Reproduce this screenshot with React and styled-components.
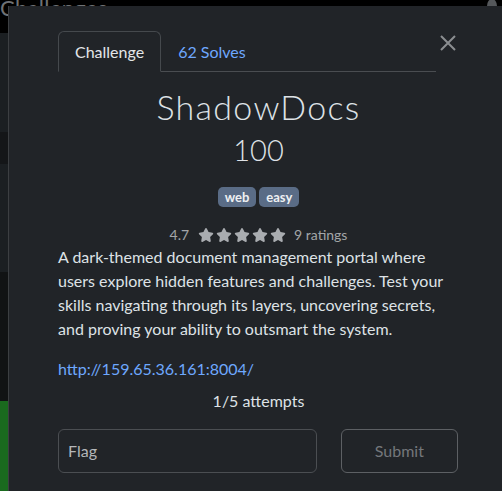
import React from "react";
import styled, { createGlobalStyle } from "styled-components";

const Global = createGlobalStyle`
  html, body { margin: 0; padding: 0; background: #000; }
  body { font-family: Lato, "Noto Sans", sans-serif; }
  * { box-sizing: border-box; }
`;

const Page = styled.div`
  position: relative;
  width: 502px;
  height: 491px;
  overflow: hidden;
  background: #000;
`;

const BgHeading = styled.h1`
  margin: 0;
  height: 33px;
  padding-left: 0;
  font-size: 22px;
  font-weight: 400;
  line-height: 16px;
  color: #6f7275;
  letter-spacing: 0.3px;
`;

const BgBlock = styled.div`
  height: ${(p) => p.$h}px;
  background: ${(p) => p.$c};
`;

const Avatar = styled.div`
  position: absolute;
  top: -1px;
  left: 487px;
  width: 10px;
  height: 14px;
  border-radius: 50%;
  background: #55585b;
`;

const Modal = styled.div`
  position: absolute;
  top: 6px;
  left: 8px;
  width: 500px;
  height: 500px;
  background: #212428;
  border-left: 1px solid #3c3f42;
  padding: 25px 49px 0 49px;
  color: #dee2e6;
`;

const HeaderRow = styled.div`
  display: flex;
  align-items: flex-start;
`;

const Tabs = styled.ul`
  flex: 1;
  display: flex;
  margin: 0;
  padding: 0;
  list-style: none;
  border-bottom: 1px solid #4a4d51;
`;

const Tab = styled.li`
  margin-bottom: -1px;
  padding: 8px 16px;
  font-size: 16px;
  line-height: 23px;
  border: 1px solid ${(p) => (p.$active ? "#45494d" : "transparent")};
  border-bottom-color: ${(p) => (p.$active ? "#212428" : "transparent")};
  border-radius: 6px 6px 0 0;
  color: ${(p) => (p.$active ? "#e4e6e8" : "#6ea8fe")};
  background: ${(p) => (p.$active ? "#212428" : "transparent")};
`;

const CloseButton = styled.button`
  margin: 4px 3px 0 4px;
  width: 16px;
  height: 16px;
  padding: 0;
  border: 0;
  background: transparent;
  display: flex;
`;

const Title = styled.h2`
  margin: 15px 0 0;
  text-align: center;
  font-size: 34px;
  line-height: 1.2;
  font-weight: 300;
  letter-spacing: 1.3px;
  color: #dee2e6;
`;

const Value = styled.h3`
  margin: 5px 0 0;
  text-align: center;
  font-size: 29px;
  line-height: 1.2;
  font-weight: 300;
  color: #dee2e6;
`;

const Tags = styled.div`
  margin-top: 19px;
  display: flex;
  justify-content: center;
  gap: 3px;
`;

const Tag = styled.span`
  height: 20px;
  padding: 0 7px;
  border-radius: 5px;
  background: #5a6c86;
  color: #eef0f2;
  font-size: 13px;
  font-weight: 700;
  line-height: 20px;
`;

const RatingRow = styled.div`
  margin-top: 18px;
  height: 20px;
  display: flex;
  align-items: center;
  justify-content: center;
  font-size: 14px;
  color: #a3a6a9;
`;

const Stars = styled.span`
  display: flex;
  gap: 2px;
  margin: 0 8px 0 9px;
`;

const Description = styled.p`
  margin: 0;
  font-size: 16px;
  line-height: 24px;
  color: #dee2e6;
`;

const Link = styled.a`
  display: block;
  margin-top: 16px;
  font-size: 16px;
  line-height: 24px;
  color: #6ea8fe;
  text-decoration: none;
`;

const Attempts = styled.p`
  margin: 8px 0 0;
  text-align: center;
  font-size: 16px;
  line-height: 24px;
  color: #dee2e6;
`;

const FormRow = styled.form`
  margin-top: 16px;
  display: grid;
  grid-template-columns: 258.67px 117.33px;
  column-gap: 24px;
`;

const FlagInput = styled.input`
  height: 44px;
  padding: 0 9px;
  border: 1px solid #4b4e52;
  border-radius: 6px;
  background: #212428;
  font-family: Lato, sans-serif;
  font-size: 16px;
  color: #dee2e6;
  outline: none;
  &::placeholder { color: #b4b7ba; }
`;

const SubmitButton = styled.button`
  height: 44px;
  border: 1px solid #5d6064;
  border-radius: 6px;
  background: transparent;
  font-family: Lato, sans-serif;
  font-size: 16px;
  color: #74777b;
`;

const Star = () => (
  <svg width="16" height="14" viewBox="0 0 576 512">
    <path
      fill="#a9acb0"
      d="M316.9 18C311.6 7 300.4 0 288.1 0s-23.4 7-28.8 18L195 150.3 51.4 171.5c-12 1.8-22 10.2-25.7 21.7s-.7 24.2 7.9 32.7L137.8 329 113.2 474.7c-2 12 3 24.2 12.9 31.3s23 8 33.8 2.3l128.3-68.5 128.3 68.5c10.8 5.7 23.9 4.9 33.8-2.3s14.9-19.3 12.9-31.3L438.5 329 542.7 225.9c8.6-8.5 11.7-21.2 7.9-32.7s-13.7-19.9-25.7-21.7L381.2 150.3 316.9 18z"
    />
  </svg>
);

export default function App() {
  return (
    <Page>
      <Global />
      <BgHeading>Challenges</BgHeading>
      <BgBlock $h={99} $c="#1b1f22" />
      <BgBlock $h={32} $c="#141618" />
      <BgBlock $h={108} $c="#1b1f22" />
      <BgBlock $h={129} $c="#111314" />
      <BgBlock $h={90} $c="#1a6a1e" />
      <Avatar />
      <Modal>
        <HeaderRow>
          <Tabs>
            <Tab $active>Challenge</Tab>
            <Tab>62 Solves</Tab>
          </Tabs>
          <CloseButton aria-label="Close">
            <svg width="16" height="16" viewBox="0 0 16 16">
              <path d="M1 1L15 15M15 1L1 15" stroke="#8b8e91" strokeWidth="2" />
            </svg>
          </CloseButton>
        </HeaderRow>
        <Title>ShadowDocs</Title>
        <Value>100</Value>
        <Tags>
          <Tag>web</Tag>
          <Tag>easy</Tag>
        </Tags>
        <RatingRow>
          <span>4.7</span>
          <Stars>
            <Star />
            <Star />
            <Star />
            <Star />
            <Star />
          </Stars>
          <span>9 ratings</span>
        </RatingRow>
        <Description>
          A dark-themed document management portal where users explore hidden
          features and challenges. Test your skills navigating through its
          layers, uncovering secrets, and proving your ability to outsmart the
          system.
        </Description>
        <Link href="#">http://159.65.36.161:8004/</Link>
        <Attempts>1/5 attempts</Attempts>
        <FormRow onSubmit={(e) => e.preventDefault()}>
          <FlagInput placeholder="Flag" />
          <SubmitButton type="submit">Submit</SubmitButton>
        </FormRow>
      </Modal>
    </Page>
  );
}
